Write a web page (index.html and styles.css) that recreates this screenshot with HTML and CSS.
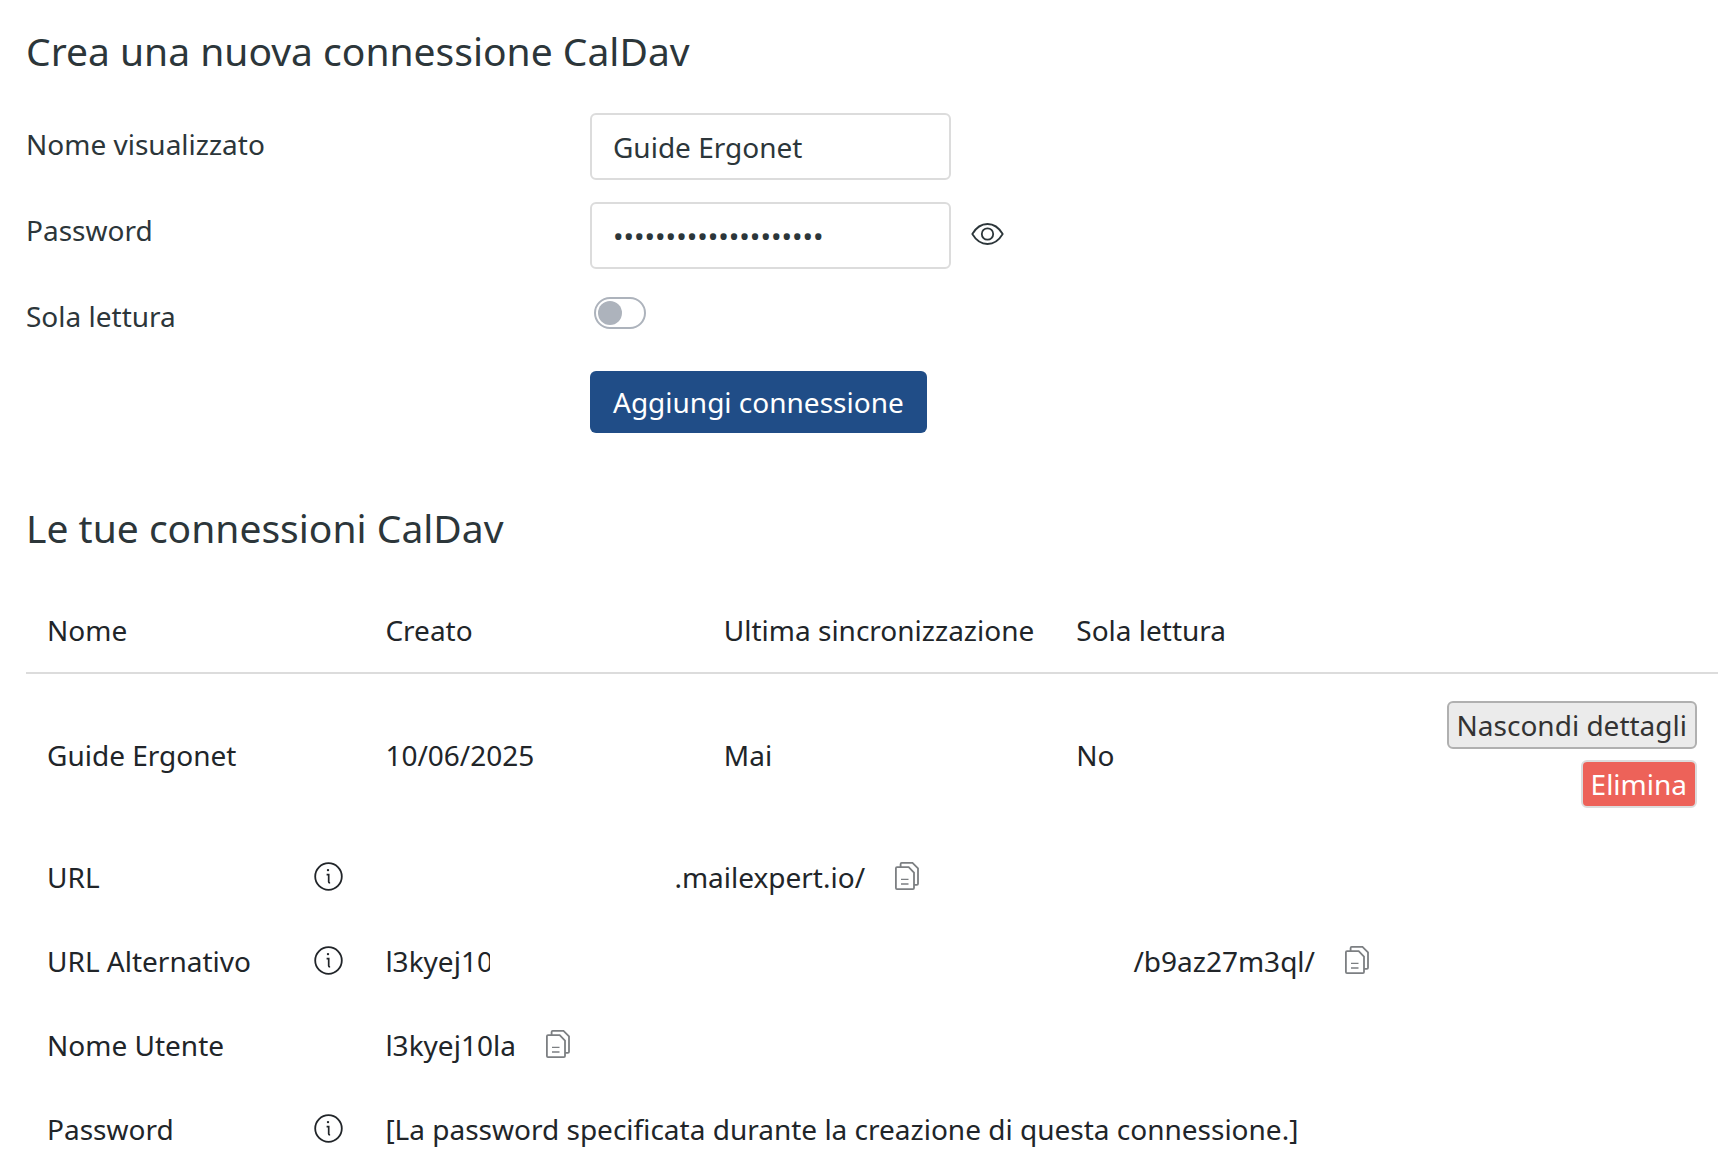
FILE: index.html
```
<!DOCTYPE html>
<html lang="it">
<head>
    <meta charset="UTF-8">
    <meta name="viewport" content="width=device-width, initial-scale=1">
    <title>Connessioni CalDav</title>
    <link rel="stylesheet" href="styles.css">
</head>
<body>
<!-- icone condivise -->
<svg class="sprite" aria-hidden="true">
    <symbol id="icon-info" viewBox="0 0 29 29">
        <circle cx="14.5" cy="14.5" r="13.3" fill="none" stroke="currentColor" stroke-width="1.8"/>
        <circle cx="14" cy="8.1" r="1.2" fill="currentColor"/>
        <path d="M12.6 12.6h2.1v7.4q0 .9 1.4.9" fill="none" stroke="currentColor" stroke-width="1.7"/>
    </symbol>
    <symbol id="icon-copy" viewBox="0 0 24 28">
        <path d="M5.6 4.6V2q0-1.1 1.1-1.1H17.5L23 6.4V21.7q0 1.1-1.1 1.1H19.6M2 5.2H13.7L19 10.6V26q0 1.1-1.1 1.1H2q-1.1 0-1.1-1.1V6.3q0-1.1 1.1-1.1z" fill="none" stroke="currentColor" stroke-width="1.8"/>
        <path d="M6 17.3h7.5M6 22h7.5" fill="none" stroke="currentColor" stroke-width="1.3"/>
    </symbol>
</svg>

<div class="wrap">
    <h1 class="title">Crea una nuova connessione CalDav</h1>
    <form class="new-connection">
        <div class="form-row">
            <label for="displayName">Nome visualizzato</label>
            <div class="control">
                <input type="text" id="displayName" class="textfield" value="Guide Ergonet">
            </div>
        </div>
        <div class="form-row">
            <label for="password">Password</label>
            <div class="control password">
                <input type="password" id="password" class="textfield" value="guide-ergonet-caldav">
                <button type="button" class="icon-btn" aria-label="Mostra password">
                    <svg class="eye" viewBox="0 0 33 22">
                        <path d="M1.3 11C5 4.8 10.5 1 16.5 1S28 4.8 31.7 11C28 17.2 22.5 21 16.5 21S5 17.2 1.3 11z" fill="none" stroke="currentColor" stroke-width="1.8" stroke-linejoin="round"/>
                        <circle cx="16.5" cy="11" r="5.7" fill="none" stroke="currentColor" stroke-width="1.8"/>
                    </svg>
                </button>
            </div>
        </div>
        <div class="form-row">
            <label for="readOnly">Sola lettura</label>
            <div class="control">
                <input type="checkbox" id="readOnly" class="switch">
            </div>
        </div>
        <div class="form-row">
            <div class="control actions">
                <button type="button" class="btn-primary">Aggiungi connessione</button>
            </div>
        </div>
    </form>

    <h2 class="title">Le tue connessioni CalDav</h2>
    <table class="connections">
        <thead>
            <tr>
                <th scope="col">Nome</th>
                <th scope="col">Creato</th>
                <th scope="col">Ultima sincronizzazione</th>
                <th scope="col">Sola lettura</th>
                <td></td>
            </tr>
        </thead>
        <tbody>
            <tr>
                <td>Guide Ergonet</td>
                <td>10/06/2025</td>
                <td>Mai</td>
                <td>No</td>
                <td>
                    <div class="row-actions">
                        <button type="button" class="btn-small">Nascondi dettagli</button>
                        <button type="button" class="btn-small btn-danger">Elimina</button>
                    </div>
                </td>
            </tr>
            <tr>
                <th scope="row">
                    <div class="detail-name">URL
                        <svg class="info"><use href="#icon-info"/></svg>
                    </div>
                </th>
                <td colspan="4">
                    <div class="detail-value">
                        <span class="hidden-host"></span>
                        <span>.mailexpert.io/</span>
                        <button type="button" class="icon-btn copy" aria-label="Copia URL"><svg><use href="#icon-copy"/></svg></button>
                    </div>
                </td>
            </tr>
            <tr>
                <th scope="row">
                    <div class="detail-name">URL Alternativo
                        <svg class="info"><use href="#icon-info"/></svg>
                    </div>
                </th>
                <td colspan="4">
                    <div class="detail-value">
                        <span class="cut">l3kyej10</span>
                        <span class="hidden-path"></span>
                        <span>/b9az27m3ql/</span>
                        <button type="button" class="icon-btn copy" aria-label="Copia URL alternativo"><svg><use href="#icon-copy"/></svg></button>
                    </div>
                </td>
            </tr>
            <tr>
                <th scope="row">Nome Utente</th>
                <td colspan="4">
                    <div class="detail-value">
                        <span>l3kyej10la</span>
                        <button type="button" class="icon-btn copy" aria-label="Copia nome utente"><svg><use href="#icon-copy"/></svg></button>
                    </div>
                </td>
            </tr>
            <tr>
                <th scope="row">
                    <div class="detail-name">Password
                        <svg class="info"><use href="#icon-info"/></svg>
                    </div>
                </th>
                <td colspan="4">[La password specificata durante la creazione di questa connessione.]</td>
            </tr>
        </tbody>
    </table>
</div>
</body>
</html>
```
FILE: styles.css
```
* {
    box-sizing: border-box;
    margin: 0;
    padding: 0;
}
body {
    background-color: #fff;
    color: #2c363a;
    font-family: "Noto Sans", sans-serif;
    font-size: 28px;
    line-height: 42px;
}
input,
button {
    font: inherit;
    color: inherit;
}
button {
    cursor: pointer;
}
.sprite {
    display: none;
}
.wrap {
    padding: 26px 18px 0 26px;
}
.title {
    font-size: 39px;
    font-weight: 400;
    line-height: 50px;
}

/* form */
.new-connection {
    margin: 37px 0 46px;
}
.form-row {
    display: flex;
    height: 86px;
}
.form-row label {
    width: calc(100% / 3);
    padding-top: 10px;
}
.control {
    display: flex;
    align-items: flex-start;
}
.password {
    padding-top: 3px;
}
.actions {
    margin-left: calc(100% / 3);
}
.textfield {
    width: 361px;
    height: 67px;
    padding: 0 21px;
    border: 2px solid #dcdcdc;
    border-radius: 6px;
    background-color: #fff;
}
.icon-btn {
    display: flex;
    border: 0;
    background: none;
}
.password .icon-btn {
    padding: 21px 20px;
}
.eye {
    width: 33px;
    height: 22px;
}
.switch {
    display: flex;
    align-items: center;
    width: 52px;
    height: 32px;
    margin: 12px 4px;
    padding: 2px;
    border: 2px solid #adb3bc;
    border-radius: 16px;
    appearance: none;
}
.switch::before {
    content: "";
    width: 24px;
    height: 24px;
    border-radius: 50%;
    background-color: #adb3bc;
}
.switch:checked {
    justify-content: flex-end;
}
.btn-primary {
    height: 62px;
    padding: 0 23px;
    border: 0;
    border-radius: 6px;
    background-color: #204d87;
    color: #fff;
}

/* table */
.connections {
    width: 100%;
    margin-top: 35px;
    border-collapse: collapse;
    color: #212529;
}
.connections th,
.connections td {
    padding: 21px;
    font-weight: 400;
    text-align: left;
    white-space: nowrap;
}
.connections thead {
    border-bottom: 2px solid #dcdcdc;
}
.connections thead th {
    width: 20%;
}
.row-actions {
    display: flex;
    flex-direction: column;
    align-items: flex-end;
    gap: 11px;
    padding: 6px 0;
}
.btn-small {
    height: 48px;
    padding: 0 8px;
    border: 2px solid #b0b0b0;
    border-radius: 6px;
    background-color: #ebebeb;
    color: #333;
    line-height: 44px;
}
.btn-danger {
    border-color: #dcdcdc;
    background-color: #ed6259;
    color: #fff;
}
.detail-name {
    display: flex;
    align-items: center;
    justify-content: space-between;
}
.info {
    width: 29px;
    height: 29px;
    margin-bottom: 2px;
}
.detail-value {
    display: flex;
    align-items: center;
}
.hidden-host {
    width: 289px;
}
.hidden-path {
    width: 643px;
}
.cut {
    width: 105px;
    overflow: hidden;
}
.copy {
    margin: 0 0 2px 30px;
    color: #7c7f82;
}
.copy svg {
    width: 24px;
    height: 28px;
}
```
